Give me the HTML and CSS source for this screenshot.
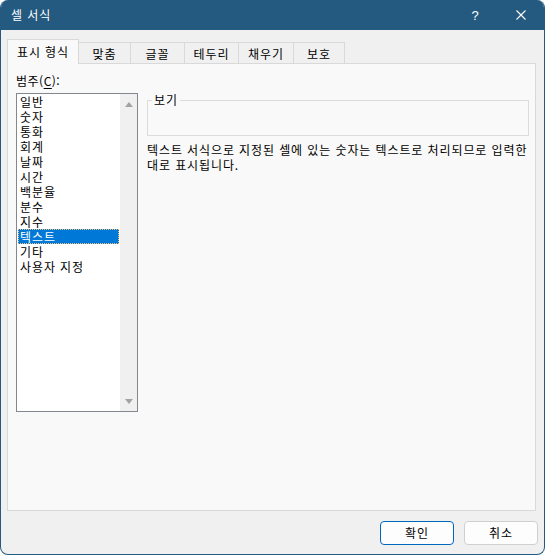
FILE: index.html
```html
<!DOCTYPE html>
<html lang="ko">
<head>
<meta charset="utf-8">
<title>셀 서식</title>
<link rel="stylesheet" href="styles.css">
</head>
<body>
<div class="window">
  <div class="titlebar">
    <span class="title">셀 서식</span>
    <span class="caption-btn help">?</span>
    <span class="caption-btn close">
      <svg width="10" height="10" viewBox="0 0 10 10"><path d="M0.5 0.5 L9.5 9.5 M9.5 0.5 L0.5 9.5" stroke="#fff" stroke-width="1.1" fill="none"/></svg>
    </span>
  </div>
  <div class="tabs">
    <div class="tab active t1">표시 형식</div>
    <div class="tab t2">맞춤</div>
    <div class="tab t3">글꼴</div>
    <div class="tab t4">테두리</div>
    <div class="tab t5">채우기</div>
    <div class="tab t6">보호</div>
  </div>
  <div class="panel">
    <div class="left-col">
      <div class="label">범주(<u>C</u>):</div>
      <div class="listbox">
        <ul class="items">
          <li>일반</li>
          <li>숫자</li>
          <li>통화</li>
          <li>회계</li>
          <li>날짜</li>
          <li>시간</li>
          <li>백분율</li>
          <li>분수</li>
          <li>지수</li>
          <li class="selected">텍스트</li>
          <li>기타</li>
          <li>사용자 지정</li>
        </ul>
        <div class="scrollbar">
          <span class="arrow up"></span>
          <span class="arrow down"></span>
        </div>
      </div>
    </div>
    <div class="right-col">
      <div class="group">
        <span class="legend">보기</span>
      </div>
      <p class="desc">텍스트 서식으로 지정된 셀에 있는 숫자는 텍스트로 처리되므로 입력한 대로 표시됩니다.</p>
    </div>
  </div>
  <div class="footer">
    <button class="btn primary">확인</button>
    <button class="btn">취소</button>
  </div>
</div>
</body>
</html>
```
FILE: styles.css
```css
* { box-sizing: border-box; }
html, body { margin: 0; padding: 0; background: #ffffff; }
body {
  font-family: "Noto Sans CJK KR", "Malgun Gothic", sans-serif;
  font-size: 12px;
  letter-spacing: 0.9px;
  color: #000;
  word-break: keep-all;
}
.window {
  width: 545px;
  height: 555px;
  border: 1px solid #245a80;
  border-top: none;
  border-radius: 8px;
  background: #f0f0f0;
  display: flex;
  flex-direction: column;
  overflow: hidden;
}
.titlebar {
  height: 30px;
  flex: none;
  background: #245a80;
  color: #fff;
  display: flex;
  align-items: center;
  padding-left: 10px;
}
.title { flex: 1; font-size: 12px; line-height: 30px; }
.caption-btn {
  width: 46px;
  height: 30px;
  display: flex;
  align-items: center;
  justify-content: center;
  letter-spacing: 0;
}
.help { font-size: 13px; font-family: "Liberation Sans", sans-serif; }
.tabs {
  flex: none;
  display: flex;
  align-items: flex-end;
  margin-top: 9px;
  padding-left: 6px;
  height: 24px;
  position: relative;
  z-index: 1;
}
.tab {
  height: 21px;
  border: 1px solid #d9d9d9;
  border-bottom: none;
  margin-left: -1px;
  display: flex;
  align-items: center;
  justify-content: center;
  line-height: 15px;
  padding-top: 1px;
  white-space: nowrap;
}
.tab.active {
  height: 25px;
  margin-left: 0;
  margin-bottom: -1px;
  background: #f9f9f9;
  padding-top: 0;
  padding-bottom: 2px;
}
.t1 { width: 72px; }
.t2 { width: 53px; }
.t3 { width: 55px; }
.t4 { width: 55px; }
.t5 { width: 56px; }
.t6 { width: 52px; }
.panel {
  flex: none;
  height: 448px;
  margin: 0 8px 0 6px;
  border: 1px solid #d9d9d9;
  background: #f9f9f9;
  display: flex;
  padding: 9px 0 0 8px;
  gap: 9px;
}
.left-col { width: 122px; flex: none; }
.label { line-height: 15px; letter-spacing: 0.5px; }
.label u { text-decoration-thickness: 1px; text-underline-offset: 2px; }
.listbox {
  margin-top: 5px;
  height: 319px;
  border: 1px solid #828790;
  background: #fff;
  display: flex;
}
.items {
  list-style: none;
  margin: 0;
  padding: 0 1px;
  flex: 1;
}
.items li {
  height: 15px;
  line-height: 15px;
  padding-left: 2px;
  white-space: nowrap;
}
.items li.selected {
  background: #0078d7;
  color: #fff;
  outline: 1px dotted #f0c080;
  outline-offset: -1px;
}
.scrollbar {
  width: 17px;
  flex: none;
  background: #f0f0f0;
  display: flex;
  flex-direction: column;
  justify-content: space-between;
  align-items: center;
  padding: 8px 0 7px;
}
.arrow {
  width: 0;
  height: 0;
  border-left: 4.5px solid transparent;
  border-right: 4.5px solid transparent;
}
.arrow.up { border-bottom: 5px solid #a3a3a3; }
.arrow.down { border-top: 5px solid #a3a3a3; }
.right-col { width: 382px; flex: none; padding-top: 27px; }
.group {
  height: 36px;
  border: 1px solid #dcdcdc;
  padding-left: 4px;
}
.legend {
  display: inline-block;
  margin-top: -9px;
  padding: 0 2px;
  background: #f9f9f9;
  line-height: 15px;
  vertical-align: top;
}
.desc {
  margin: 6px 0 0;
  line-height: 15px;
  word-break: keep-all;
}
.footer {
  flex: none;
  display: flex;
  justify-content: flex-end;
  gap: 10px;
  margin-top: 10px;
  padding-right: 6px;
}
.btn {
  width: 74px;
  height: 24px;
  font-family: inherit;
  font-size: 12px;
  letter-spacing: 1px;
  background: #fdfdfd;
  border: 1px solid #d0d0d0;
  border-radius: 4px;
  color: #000;
  padding: 0;
  line-height: 20px;
}
.btn.primary { border-color: #0067c0; }
```
